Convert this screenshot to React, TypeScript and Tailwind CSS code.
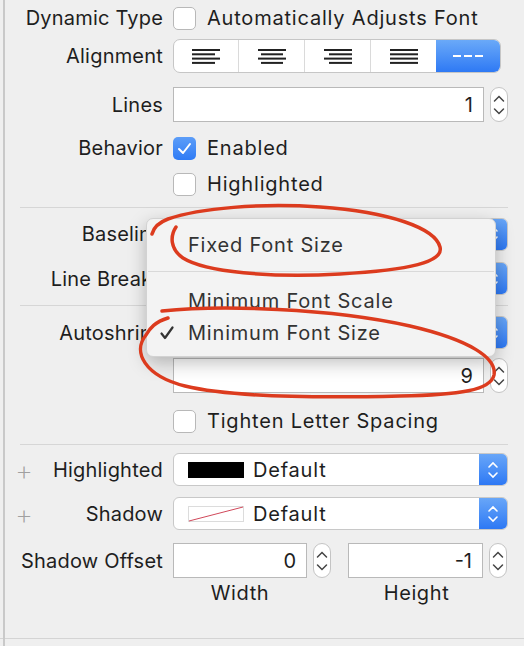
import React from 'react';

const FONT = { fontFamily: 'Inter, "Liberation Sans", Arial, sans-serif' };

const Label: React.FC<{ text: string; plus?: boolean }> = ({ text, plus }) => (
  <div className="w-[163px] shrink-0 flex items-center justify-between pl-[15px]">
    <span className="text-[28px] leading-none text-[#a0a0a0] font-extralight">{plus ? '+' : ''}</span>
    <span className="whitespace-nowrap tracking-[0.2px]">{text}</span>
  </div>
);

const Checkbox: React.FC<{ checked?: boolean }> = ({ checked }) =>
  checked ? (
    <div className="w-[23px] h-[23px] rounded-[5px] bg-gradient-to-b from-[#5c9df8] to-[#2f7bf5] flex items-center justify-center shrink-0">
      <svg width="15" height="13" viewBox="0 0 15 13">
        <path d="M2 7 L6 11 L13 2" fill="none" stroke="white" strokeWidth="2" strokeLinecap="round" strokeLinejoin="round" />
      </svg>
    </div>
  ) : (
    <div className="w-[23px] h-[23px] rounded-[5px] bg-white border border-[#b8b8b8] shrink-0" />
  );

const Stepper: React.FC = () => (
  <div className="w-[18px] h-[35px] rounded-[9px] bg-white border border-[#c4c4c4] flex items-center justify-center shrink-0">
    <svg width="14" height="28" viewBox="0 0 14 28">
      <path d="M2.5 10 L7 5.5 L11.5 10" fill="none" stroke="#444" strokeWidth="1.5" strokeLinecap="round" />
      <path d="M2.5 18 L7 22.5 L11.5 18" fill="none" stroke="#444" strokeWidth="1.5" strokeLinecap="round" />
    </svg>
  </div>
);

const NumberField: React.FC<{ value: string; w: string }> = ({ value, w }) => (
  <div className={`${w} h-[35px] bg-white border border-[#b9b9b9] flex items-center justify-end pr-[10px] shrink-0`}>
    {value}
  </div>
);

const Popup: React.FC<{ children?: React.ReactNode }> = ({ children }) => (
  <div className="w-[335px] h-[33px] rounded-[6px] bg-white border border-[#c8c8c8] flex items-stretch overflow-hidden">
    <div className="flex-1 flex items-center pl-[14px] gap-[9px] tracking-[0.8px]">{children}</div>
    <div className="w-[28px] bg-gradient-to-b from-[#68a6f8] to-[#2d78f4] flex items-center justify-center">
      <svg width="14" height="24" viewBox="0 0 14 24">
        <path d="M3 9 L7 5 L11 9" fill="none" stroke="white" strokeWidth="1.6" strokeLinecap="round" />
        <path d="M3 15 L7 19 L11 15" fill="none" stroke="white" strokeWidth="1.6" strokeLinecap="round" />
      </svg>
    </div>
  </div>
);

// alignment glyph: each line [x1, x2]
const AlignIcon: React.FC<{ lines: [number, number][] }> = ({ lines }) => (
  <svg width="30" height="16" viewBox="0 0 30 16">
    {lines.map(([a, b], i) => (
      <rect key={i} x={a} y={1 + i * 4.3} width={b - a} height="2" fill="#222" />
    ))}
  </svg>
);

const Separator: React.FC<{ mt: string }> = ({ mt }) => (
  <div className={`${mt} ml-[20px] w-[488px] h-px bg-[#d6d6d6]`} />
);

export default function App() {
  return (
    <div className="relative w-[524px] h-[646px] bg-[#efefef] text-[20px] text-[#1e1e1e] overflow-hidden" style={FONT}>
      {/* left edge */}
      <div className="absolute left-[3px] top-0 w-[2px] h-full bg-[#c9c9c9]" />

      <div className="flex flex-col">
        {/* Dynamic Type */}
        <div className="flex items-center h-[24px] mt-[6px]">
          <Label text="Dynamic Type" />
          <div className="ml-[10px] flex items-center gap-[11px]">
            <Checkbox />
            <span className="tracking-[0.8px]">Automatically Adjusts Font</span>
          </div>
        </div>

        {/* Alignment */}
        <div className="flex items-center h-[34px] mt-[9px]">
          <Label text="Alignment" />
          <div className="ml-[10px] w-[328px] h-[34px] rounded-[7px] border border-[#c6c6c6] bg-white flex overflow-hidden">
            <div className="w-[65px] flex items-center justify-center border-r border-[#dadada]">
              <AlignIcon lines={[[1, 29], [1, 24], [1, 29], [1, 24]]} />
            </div>
            <div className="w-[66px] flex items-center justify-center border-r border-[#dadada]">
              <AlignIcon lines={[[1, 29], [4, 26], [1, 29], [4, 26]]} />
            </div>
            <div className="w-[66px] flex items-center justify-center border-r border-[#dadada]">
              <AlignIcon lines={[[1, 29], [6, 29], [1, 29], [6, 29]]} />
            </div>
            <div className="w-[65px] flex items-center justify-center">
              <AlignIcon lines={[[1, 29], [1, 29], [1, 29], [1, 29]]} />
            </div>
            <div className="flex-1 flex items-center justify-center bg-gradient-to-b from-[#6aa9f8] to-[#2e79f4]">
              <svg width="30" height="6" viewBox="0 0 30 6">
                <rect x="0" y="2" width="8" height="2" fill="white" />
                <rect x="11" y="2" width="8" height="2" fill="white" />
                <rect x="22" y="2" width="8" height="2" fill="white" />
              </svg>
            </div>
          </div>
        </div>

        {/* Lines */}
        <div className="flex items-center h-[35px] mt-[14px]">
          <Label text="Lines" />
          <div className="ml-[10px] flex items-center gap-[6px]">
            <NumberField value="1" w="w-[311px]" />
            <Stepper />
          </div>
        </div>

        {/* Behavior */}
        <div className="flex items-center h-[24px] mt-[14px]">
          <Label text="Behavior" />
          <div className="ml-[10px] flex items-center gap-[11px]">
            <Checkbox checked />
            <span className="tracking-[0.8px]">Enabled</span>
          </div>
        </div>
        <div className="flex items-center h-[24px] mt-[12px]">
          <div className="w-[163px] shrink-0" />
          <div className="ml-[10px] flex items-center gap-[11px]">
            <Checkbox />
            <span className="tracking-[0.8px]">Highlighted</span>
          </div>
        </div>

        <Separator mt="mt-[11px]" />

        {/* Baseline */}
        <div className="flex items-center h-[32px] mt-[10px]">
          <Label text="Baseline" />
          <div className="ml-[10px]">
            <Popup>
              <span>Align Baselines</span>
            </Popup>
          </div>
        </div>

        {/* Line Breaks */}
        <div className="flex items-center h-[33px] mt-[12px]">
          <Label text="Line Breaks" />
          <div className="ml-[10px]">
            <Popup>
              <span>Truncate Tail</span>
            </Popup>
          </div>
        </div>

        <Separator mt="mt-[10px]" />

        {/* Autoshrink */}
        <div className="flex items-center h-[33px] mt-[10px]">
          <Label text="Autoshrink" />
          <div className="ml-[10px]">
            <Popup>
              <span>Minimum Font Size</span>
            </Popup>
          </div>
        </div>
        <div className="flex items-center h-[35px] mt-[9px]">
          <div className="w-[163px] shrink-0" />
          <div className="ml-[10px] flex items-center gap-[6px]">
            <NumberField value="9" w="w-[311px]" />
            <Stepper />
          </div>
        </div>
        <div className="flex items-center h-[24px] mt-[16px]">
          <div className="w-[163px] shrink-0" />
          <div className="ml-[10px] flex items-center gap-[11px]">
            <Checkbox />
            <span className="tracking-[0.8px]">Tighten Letter Spacing</span>
          </div>
        </div>

        <Separator mt="mt-[11px]" />

        {/* Highlighted color */}
        <div className="flex items-center h-[33px] mt-[8px]">
          <Label text="Highlighted" plus />
          <div className="ml-[10px]">
            <Popup>
              <div className="w-[56px] h-[16px] bg-black" />
              <span>Default</span>
            </Popup>
          </div>
        </div>

        {/* Shadow */}
        <div className="flex items-center h-[33px] mt-[11px]">
          <Label text="Shadow" plus />
          <div className="ml-[10px]">
            <Popup>
              <svg width="56" height="16" viewBox="0 0 56 16">
                <rect x="0.5" y="0.5" width="55" height="15" fill="white" stroke="#dcdcdc" />
                <line x1="1" y1="15" x2="55" y2="1" stroke="#d0485a" strokeWidth="1" />
              </svg>
              <span>Default</span>
            </Popup>
          </div>
        </div>

        {/* Shadow Offset */}
        <div className="flex items-center h-[35px] mt-[13px]">
          <Label text="Shadow Offset" />
          <div className="ml-[10px] flex items-center">
            <NumberField value="0" w="w-[134px]" />
            <div className="ml-[6px]">
              <Stepper />
            </div>
            <div className="ml-[17px]">
              <NumberField value="-1" w="w-[135px]" />
            </div>
            <div className="ml-[6px]">
              <Stepper />
            </div>
          </div>
        </div>
        <div className="flex items-center h-[22px] mt-[4px] tracking-[0.6px]">
          <div className="w-[163px] shrink-0" />
          <div className="ml-[10px] w-[134px] text-center">Width</div>
          <div className="ml-[42px] w-[135px] text-center">Height</div>
        </div>

        <div className="mt-[34px] w-full h-px bg-[#d4d4d4]" />
      </div>

      {/* popup menu */}
      <div className="absolute left-[146px] top-[218px] w-[350px] h-[139px] rounded-[7px] bg-[#f3f3f3] border border-[#d2d2d2] shadow-[0_6px_18px_rgba(0,0,0,0.25)] text-[#333] tracking-[0.8px] flex flex-col">
        <div className="h-[52px] flex items-center pl-[41px]">Fixed Font Size</div>
        <div className="mx-[1px] h-px bg-[#d9d9d9]" />
        <div className="h-[30px] mt-[14px] flex items-center pl-[41px]">Minimum Font Scale</div>
        <div className="h-[30px] mt-[2px] flex items-center">
          <span className="w-[41px] pl-[13px] flex items-center">
            <svg width="14" height="14" viewBox="0 0 14 14">
              <path d="M1.5 7.5 L5 12 L12.5 1.5" fill="none" stroke="#333" strokeWidth="2.2" strokeLinecap="round" strokeLinejoin="round" />
            </svg>
          </span>
          <span>Minimum Font Size</span>
        </div>
      </div>

      {/* red annotations */}
      <svg className="absolute inset-0 pointer-events-none" width="524" height="646" viewBox="0 0 524 646">
        <path
          d="M152 234 C154 226 160 222 168 219 C200 208 260 203 320 207 C390 212 435 228 440 247 C444 262 410 270 340 274 C270 278 205 272 183 258 C170 249 170 236 176 227"
          fill="none"
          stroke="#dc3b1e"
          strokeWidth="3.5"
          strokeLinecap="round"
        />
        <path
          d="M162 311 C220 305 330 308 410 326 C470 340 497 358 494 375 C491 390 460 395 400 396 C320 398 230 397 185 386 C145 376 132 352 146 335 C150 328 155 322 168 318"
          fill="none"
          stroke="#dc3b1e"
          strokeWidth="3.5"
          strokeLinecap="round"
        />
      </svg>
    </div>
  );
}
